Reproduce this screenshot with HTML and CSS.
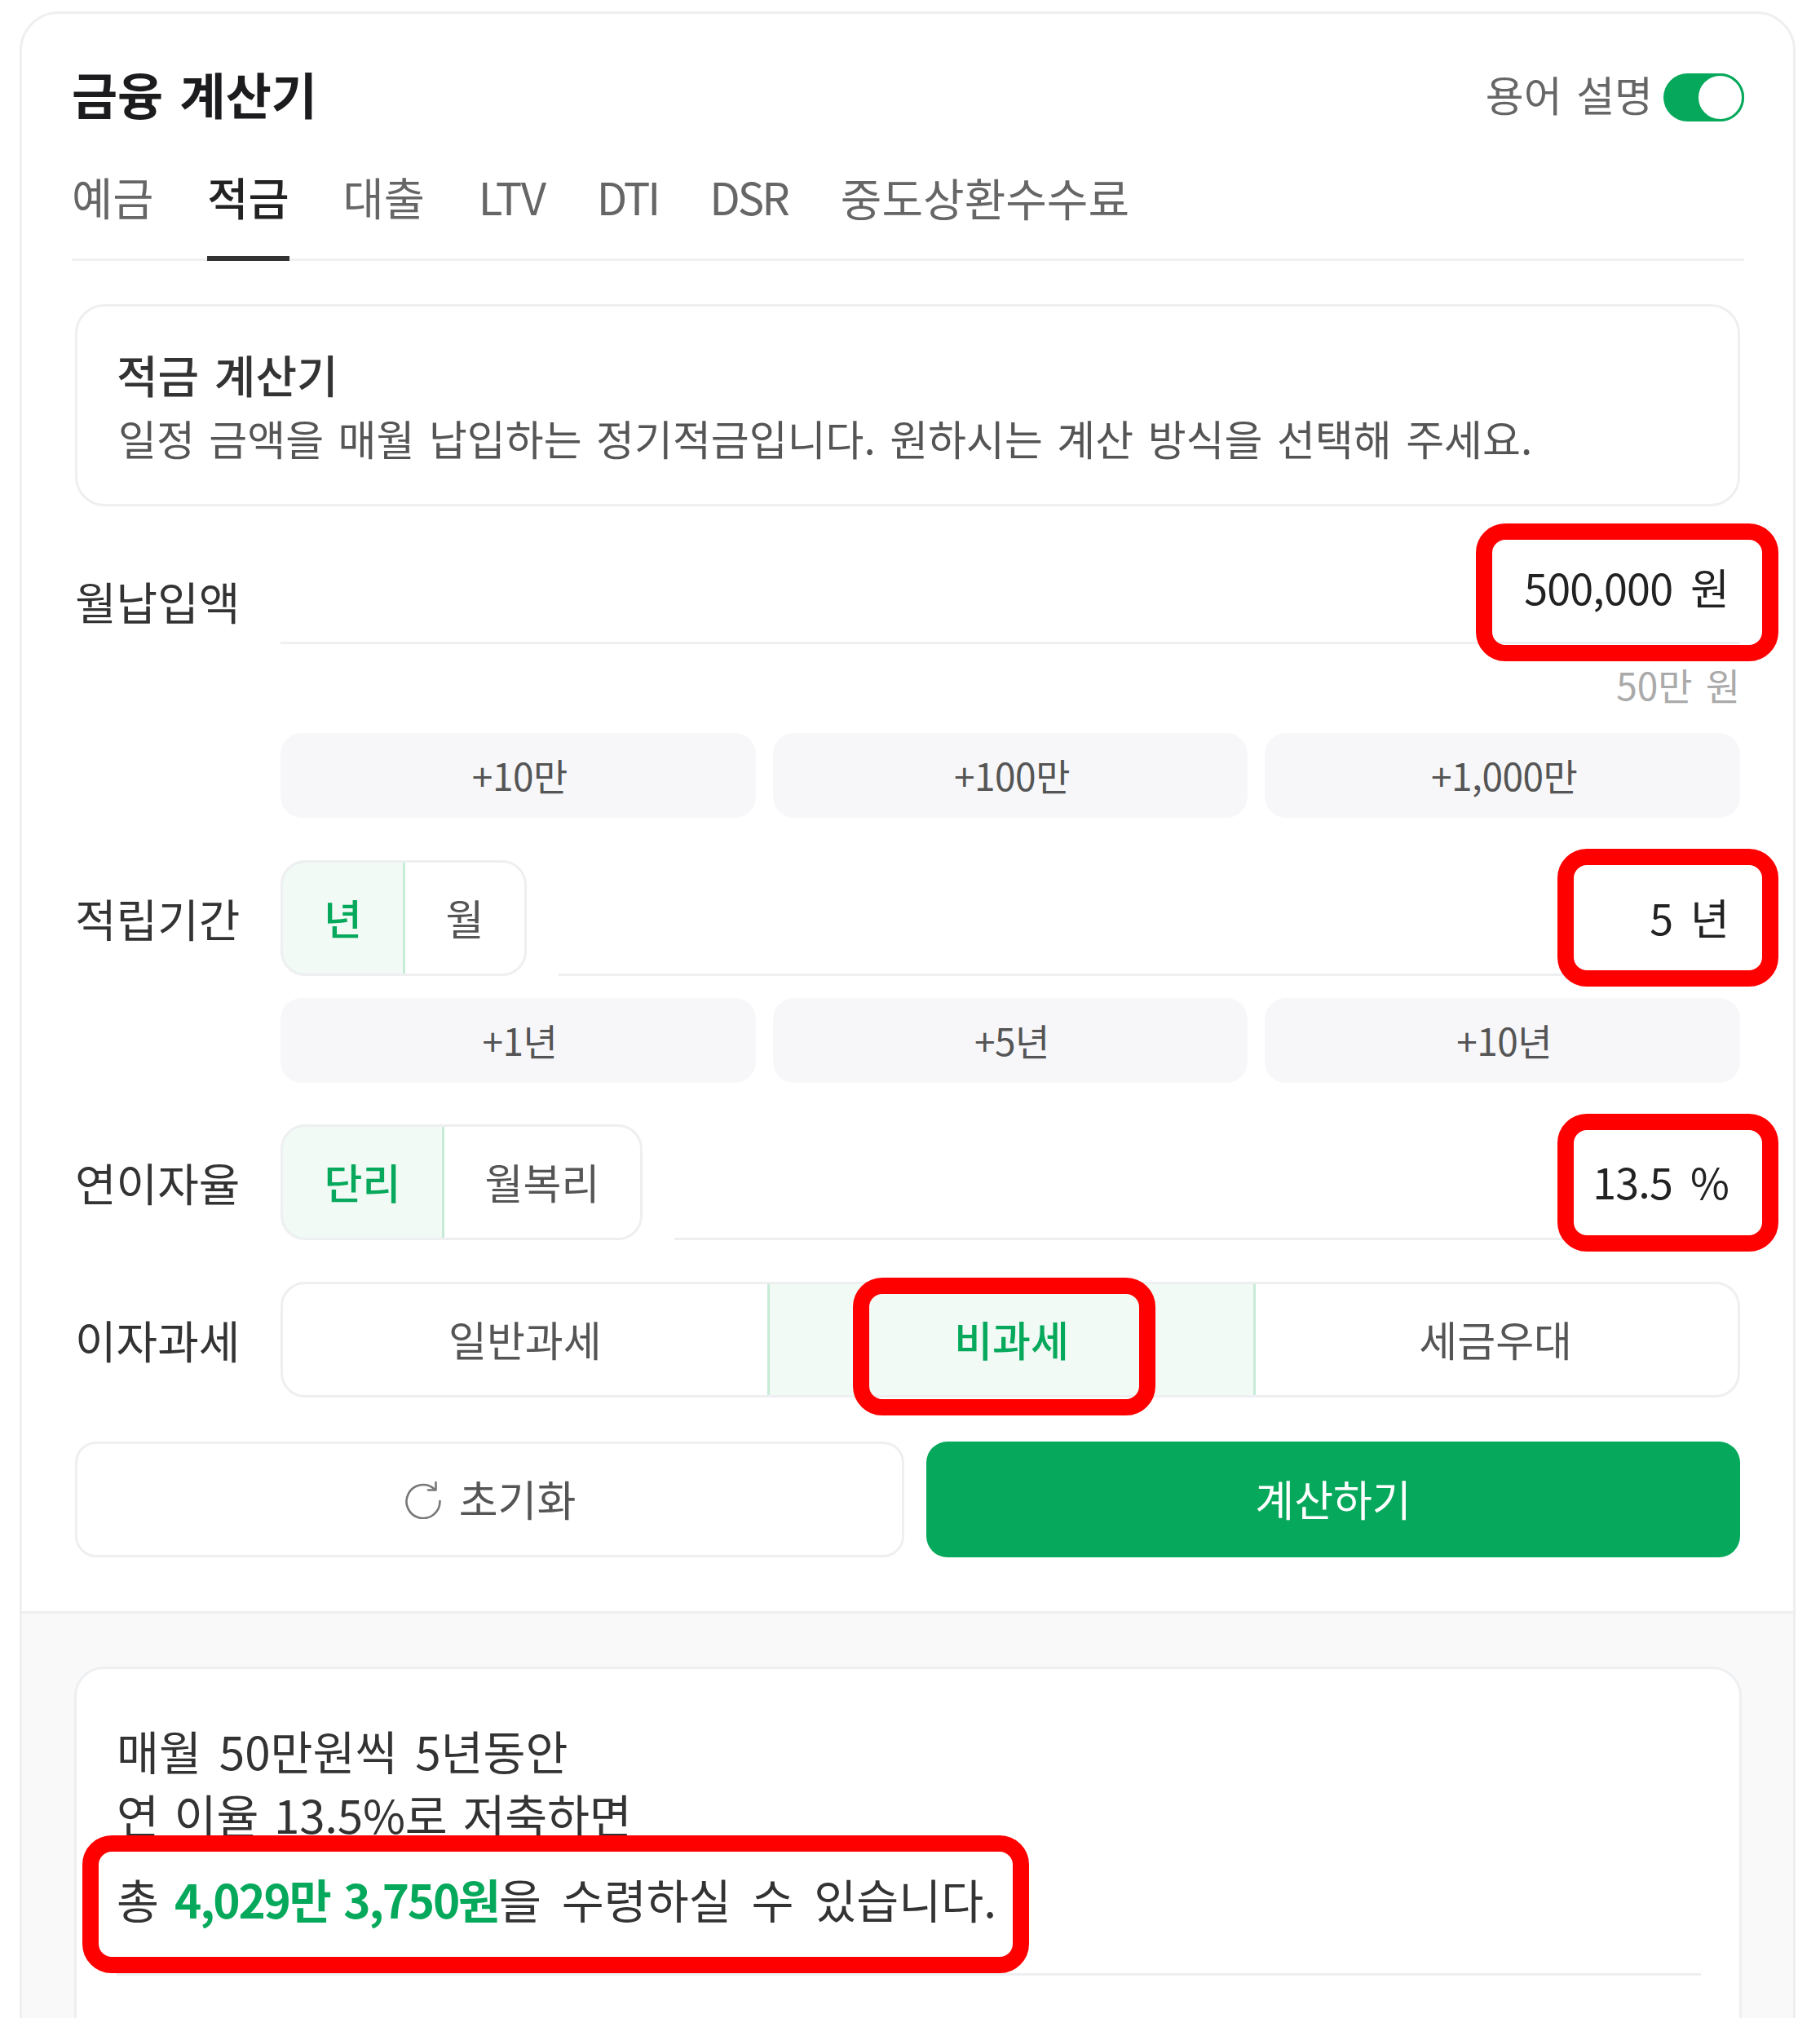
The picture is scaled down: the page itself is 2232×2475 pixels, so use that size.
FILE: index.html
```html
<!DOCTYPE html>
<html lang="ko">
<head>
<meta charset="utf-8">
<title>금융 계산기</title>
<link rel="stylesheet" href="styles.css">
</head>
<body>
<main class="card">
  <div class="top">
    <header class="header">
      <h1 class="title">금융 계산기</h1>
      <div class="term">
        <span class="term-label">용어 설명</span>
        <span class="toggle"><span class="knob"></span></span>
      </div>
    </header>
    <nav class="tabs">
      <span class="tab">예금</span>
      <span class="tab tab-active">적금</span>
      <span class="tab">대출</span>
      <span class="tab tab-latin">LTV</span>
      <span class="tab tab-latin tab-tight">DTI</span>
      <span class="tab tab-latin tab-tight">DSR</span>
      <span class="tab tab-last">중도상환수수료</span>
    </nav>
    <div class="form">
      <section class="intro">
        <h2 class="intro-title">적금 계산기</h2>
        <p class="intro-desc">일정 금액을 매월 납입하는 정기적금입니다. 원하시는 계산 방식을 선택해 주세요.</p>
      </section>

      <div class="row row-first">
        <span class="label label-first">월납입액</span>
        <div class="field field-tall"><span class="value">500,000 원</span></div>
      </div>
      <div class="hint">50만 원</div>
      <div class="quick quick-first">
        <span class="quick-btn">+10만</span>
        <span class="quick-btn">+100만</span>
        <span class="quick-btn">+1,000만</span>
      </div>

      <div class="row row-gap">
        <span class="label">적립기간</span>
        <div class="seg seg-period">
          <span class="seg-item seg-on seg-w1">년</span>
          <span class="seg-item seg-rest">월</span>
        </div>
        <div class="field"><span class="value">5 년</span></div>
      </div>
      <div class="quick quick-second">
        <span class="quick-btn">+1년</span>
        <span class="quick-btn">+5년</span>
        <span class="quick-btn">+10년</span>
      </div>

      <div class="row row-rate">
        <span class="label">연이자율</span>
        <div class="seg seg-rate">
          <span class="seg-item seg-on seg-w2">단리</span>
          <span class="seg-item seg-rest">월복리</span>
        </div>
        <div class="field"><span class="value">13.5 %</span></div>
      </div>

      <div class="row row-rate">
        <span class="label">이자과세</span>
        <div class="seg seg-tax">
          <span class="seg-item seg-third">일반과세</span>
          <span class="seg-item seg-third seg-on seg-mid">비과세</span>
          <span class="seg-item seg-third">세금우대</span>
        </div>
      </div>

      <div class="actions">
        <span class="btn btn-reset">
          <svg class="reset-icon" viewBox="0 0 48 48" fill="none" stroke="currentColor" stroke-width="2.6" stroke-linecap="round" stroke-linejoin="round"><path d="M38 11.5A20.5 20.5 0 1 0 44.5 26"/><path d="M39.5 3v9.5H30"/></svg>
          초기화
        </span>
        <span class="btn btn-calc">계산하기</span>
      </div>
    </div>
  </div>

  <section class="result-area">
    <div class="result">
      <p class="result-line result-first">매월 50만원씩 5년동안</p>
      <p class="result-line result-rate">연 이율 13.5%로 저축하면</p>
      <p class="result-line result-total">총 <strong class="amount">4,029만 3,750원</strong><span class="result-tail">을 수령하실 수 있습니다.</span></p>
      <div class="result-rule"></div>
    </div>
  </section>
</main>

<div class="mark mark-1"></div>
<div class="mark mark-2"></div>
<div class="mark mark-3"></div>
<div class="mark mark-4"></div>
<div class="mark mark-5"></div>
</body>
</html>
```

FILE: styles.css
```css
* { box-sizing: border-box; }
html, body { margin: 0; padding: 0; }
body {
  position: relative;
  height: 2475px;
  overflow: hidden;
  background: #fff;
  font-family: "Noto Sans CJK KR", "Noto Sans", sans-serif;
  color: #222;
  word-spacing: 3.2px;
}
h1, h2, p { margin: 0; font-weight: 400; }

.card {
  margin: 14px 30px 0 24px;
  border: 3px solid #eeeff1;
  border-radius: 48px;
  overflow: hidden;
  height: 2600px;
  background: #fff;
}
.top { padding: 73px 60px 0 61px; }

.header { display: flex; justify-content: space-between; align-items: center; height: 59px; }
.title { margin-top: -10px; font-size: 61px; line-height: 70px; font-weight: 700; color: #1c1c1e; }
.term { display: flex; align-items: center; gap: 13px; }
.term-label { padding-bottom: 8px; font-size: 51px; line-height: 59px; color: #666; }
.toggle { display: flex; justify-content: flex-end; width: 99px; height: 59px; border-radius: 30px; background: #06a95b; }
.knob { width: 59px; height: 59px; border-radius: 50%; background: #fff; border: 3px solid #06a95b; }

.tabs { display: flex; gap: 66px; height: 124px; margin-top: 47px; border-bottom: 3px solid #f0f0f2; }
.tab { height: 124px; font-size: 54.5px; line-height: 90px; color: #666; }
.tab-latin { letter-spacing: -1.5px; }
.tab-tight { margin-left: -3px; letter-spacing: -3px; }
.tab-last { margin-left: -1px; font-size: 55px; }
.tab-active { color: #222; font-weight: 500; border-bottom: 6px solid #333; }

.form { padding: 0 5px 0 4px; }
.intro { margin-top: 53px; height: 248px; padding: 44px 50px 0; border: 3px solid #eeeff1; border-radius: 36px; }
.intro-title { margin-left: -2px; font-size: 55px; line-height: 76px; font-weight: 500; color: #333; }
.intro-desc { margin-top: 3px; font-size: 51px; line-height: 76px; color: #555; }

.row { display: flex; align-items: center; }
.row-first { margin-top: 35px; align-items: flex-start; }
.row-gap { margin-top: 52px; }
.row-rate { margin-top: 51px; }
.label { flex: none; width: 252px; padding-bottom: 3px; font-size: 55px; line-height: 76px; color: #333; }
.label-first { margin-top: 42px; }

.field { flex: 1; align-self: stretch; display: flex; align-items: center; justify-content: flex-end; margin-left: 39px; padding-right: 14px; border-bottom: 3px solid #eeeff1; }
.field-tall { height: 134px; margin-left: 0; padding-bottom: 4px; }
.value { font-size: 52px; letter-spacing: -.8px; word-spacing: 8px; color: #222; }

.hint { margin-top: 17px; text-align: right; font-size: 46px; line-height: 64px; color: #aaa; }

.quick { display: grid; grid-template-columns: repeat(3, 1fr); gap: 21px; height: 104px; margin-left: 252px; }
.quick-first { margin-top: 28px; }
.quick-second { margin-top: 27px; }
.quick-btn { display: flex; align-items: center; justify-content: center; padding-left: 4px; padding-bottom: 2px; border-radius: 26px; background: #f7f7f9; font-size: 46px; letter-spacing: -.5px; color: #555; }

.seg { display: flex; flex: none; height: 142px; border: 3px solid #eeeff1; border-radius: 30px; overflow: hidden; font-size: 51px; color: #555; }
.seg-period { width: 302px; }
.seg-rate { width: 444px; }
.seg-tax { flex: 1; }
.seg-item { display: flex; align-items: center; justify-content: center; padding-bottom: 2px; }
.seg-rest { flex: 1; }
.seg-third { flex: 1; }
.seg-on { margin: -3px 0; border: 3px solid #c6ebd6; border-left-width: 0; background: #f1faf5; color: #06a95b; font-weight: 500; }
.seg-w1 { margin-left: -3px; border-left-width: 3px; border-radius: 30px 0 0 30px; width: 153px; }
.seg-w2 { margin-left: -3px; border-left-width: 3px; border-radius: 30px 0 0 30px; width: 201px; }
.seg-mid { margin-right: -3px; border-left-width: 3px; }

.actions { display: grid; grid-template-columns: 1017px 1fr; gap: 27px; height: 142px; margin-top: 54px; }
.btn { display: flex; align-items: center; justify-content: center; padding-bottom: 4px; border-radius: 26px; font-size: 52px; }
.btn-reset { gap: 20px; border: 3px solid #eeeff1; color: #555; }
.btn-calc { background: #06a95b; color: #fff; }
.reset-icon { width: 48px; height: 48px; margin-top: 4px; color: #777; }

.result-area { margin-top: 66px; padding: 65px 63px 0 64px; border-top: 3px solid #eeeff1; background: #f9f9fa; height: 700px; }
.result { height: 640px; padding: 60px 47px 0 49px; border: 3px solid #eeeff1; border-radius: 36px; background: #fff; }
.result-line { font-size: 56.5px; line-height: 78px; color: #333; }
.result-first { word-spacing: 6px; }
.result-rate { letter-spacing: -.2px; }
.result-total { margin-top: 26px; }
.result-tail { word-spacing: 9px; }
.amount { font-weight: 700; letter-spacing: -2.2px; color: #06a95b; }
.result-rule { margin-top: 53px; border-top: 3px solid #eeeff1; }

.mark { position: absolute; border: 20px solid #f00; border-radius: 36px; height: 169px; }
.mark-1 { left: 1810px; top: 642px; width: 371px; }
.mark-2 { left: 1910px; top: 1041px; width: 271px; }
.mark-3 { left: 1910px; top: 1366px; width: 271px; }
.mark-4 { left: 1046px; top: 1567px; width: 371px; }
.mark-5 { left: 101px; top: 2251px; width: 1161px; }
```
